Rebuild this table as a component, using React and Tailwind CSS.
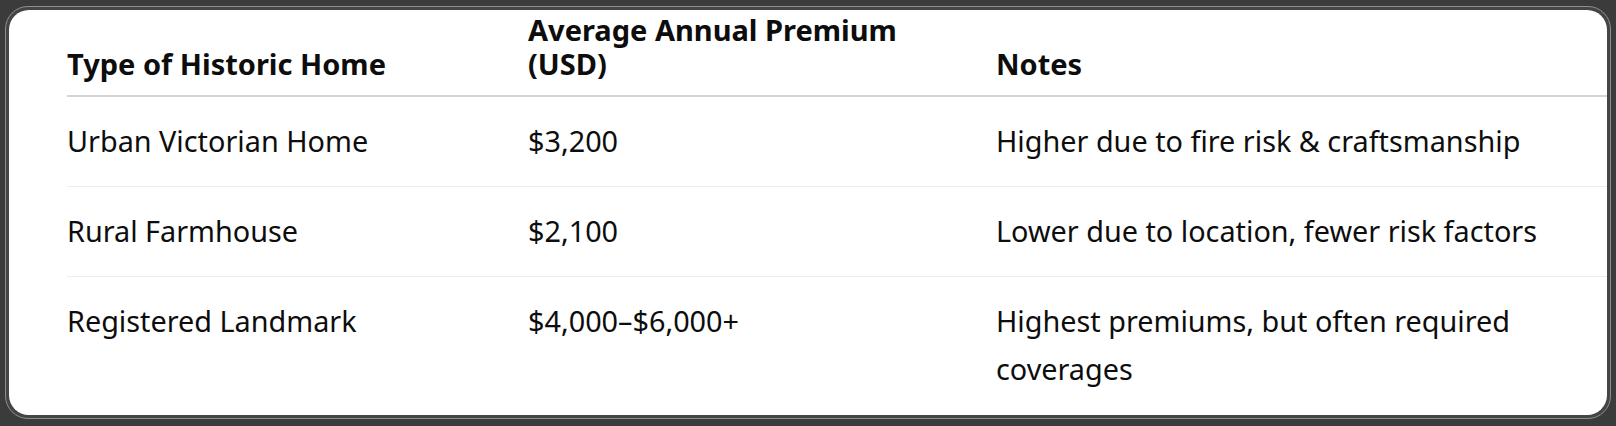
import React from "react";

const rows = [
  ["Urban Victorian Home", "$3,200", "Higher due to fire risk & craftsmanship"],
  ["Rural Farmhouse", "$2,100", "Lower due to location, fewer risk factors"],
  ["Registered Landmark", "$4,000–$6,000+", "Highest premiums, but often required coverages"],
];

export default function App() {
  return (
    <div className="w-[1616px] h-[426px] bg-[#3b3b3b] pt-[6px] pl-[5px]" style={{ fontFamily: '"Noto Sans", "Open Sans", sans-serif' }}>
      <div className="w-[1606px] h-[413px] rounded-[23px] border border-[#8e8e8e] bg-[#454545] p-[3px]">
        <div className="w-full h-full rounded-[20px] bg-white overflow-hidden pl-[58px] pt-[3px]">
          <table className="table-fixed border-collapse text-[#0d0d0d] w-[1600px]">
            <colgroup>
              <col className="w-[461px]" />
              <col className="w-[468px]" />
              <col />
            </colgroup>
            <thead>
              <tr className="border-b-2 border-[#d4d4d4]">
                <th className="text-left align-bottom font-bold text-[29px] leading-[34px] pb-[14px]">Type of Historic Home</th>
                <th className="text-left align-bottom font-bold text-[29px] leading-[34px] pb-[14px] pr-[60px]">Average Annual Premium (USD)</th>
                <th className="text-left align-bottom font-bold text-[29px] leading-[34px] pb-[14px]">Notes</th>
              </tr>
            </thead>
            <tbody>
              {rows.map((r, i) => (
                <tr key={i} className={i < rows.length - 1 ? "border-b border-[#ececec]" : ""}>
                  <td className="align-top text-[28.8px] leading-[48px] pt-[20px] pb-[21px]">{r[0]}</td>
                  <td className="align-top text-[28.8px] leading-[48px] pt-[20px] pb-[21px]">{r[1]}</td>
                  <td className="align-top text-[28.8px] leading-[48px] pt-[20px] pb-[21px] pr-[80px]">{r[2]}</td>
                </tr>
              ))}
            </tbody>
          </table>
        </div>
      </div>
    </div>
  );
}
